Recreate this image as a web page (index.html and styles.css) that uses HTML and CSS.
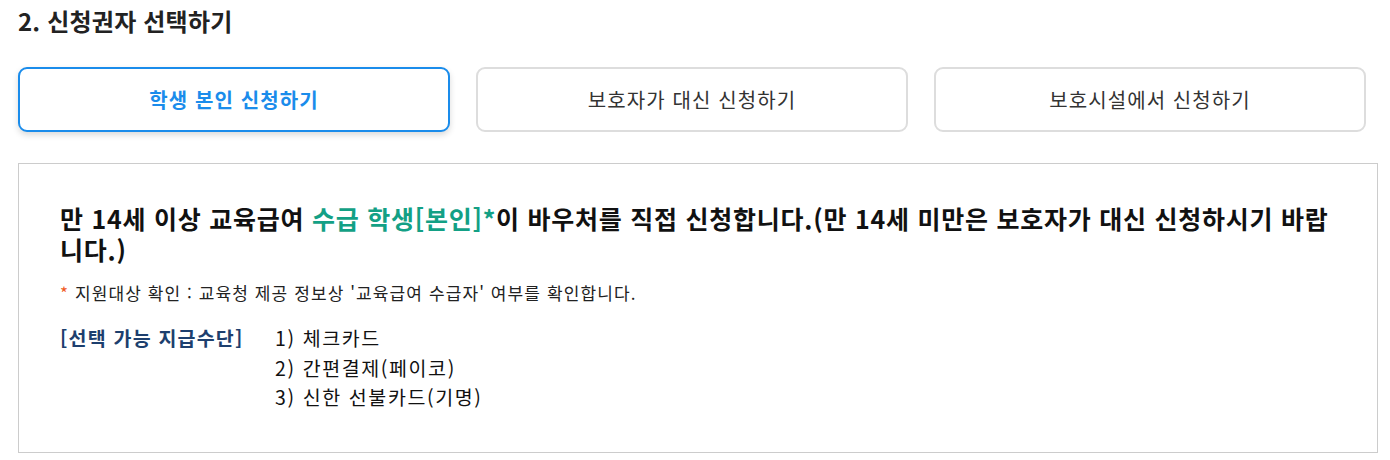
FILE: index.html
```html
<!DOCTYPE html>
<html lang="ko">
<head>
  <meta charset="UTF-8" />
  <title>신청권자 선택하기</title>
  <link rel="stylesheet" href="styles.css">
</head>
<body>
  <div class="section">
    <h2 class="section-title">2. 신청권자 선택하기</h2>

    <div class="tabs">
      <button class="tab active">학생 본인 신청하기</button>
      <button class="tab">보호자가 대신 신청하기</button>
      <button class="tab">보호시설에서 신청하기</button>
    </div>

    <div class="info-box">
      <p class="info-lead">만 14세 이상 교육급여 <span class="hl">수급 학생[본인]*</span>이 바우처를 직접 신청합니다.(만 14세 미만은 보호자가 대신 신청하시기 바랍니다.)</p>
      <p class="info-note"><span class="star">*</span> 지원대상 확인 : 교육청 제공 정보상 '교육급여 수급자' 여부를 확인합니다.</p>

      <div class="pay-means">
        <div class="pay-label">[선택 가능 지급수단]</div>
        <ul class="pay-list">
          <li>1) 체크카드</li>
          <li>2) 간편결제(페이코)</li>
          <li>3) 신한 선불카드(기명)</li>
        </ul>
      </div>
    </div>
  </div>
</body>
</html>
```

FILE: styles.css
```css
body {
  margin: 0;
  background: #fff;
  font-family: "Noto Sans CJK KR", "Noto Sans", sans-serif;
  color: #111;
}

.section {
  padding: 4px 12px 0 18px;
}

.section-title {
  margin: 0;
  font-size: 24px;
  font-weight: 700;
  color: #222;
  line-height: 34px;
  letter-spacing: 0.2px;
}

.tabs {
  display: flex;
  gap: 26px;
  margin-top: 29px;
  padding-right: 12px;
}

.tab {
  flex: 1;
  height: 65px;
  background: #fff;
  border: 2px solid #ddd;
  border-radius: 9px;
  font-family: inherit;
  font-size: 20px;
  color: #333;
  letter-spacing: 1.1px;
  padding-top: 0;
  cursor: pointer;
}

.tab.active {
  border-color: #1a8ceb;
  color: #1a8ceb;
  font-weight: 700;
  box-shadow: 0 3px 6px rgba(0, 0, 0, 0.15);
}

.info-box {
  margin-top: 31px;
  border: 1px solid #ccc;
  padding: 39px 41px 40px;
}

.info-lead {
  margin: 0;
  font-size: 25px;
  font-weight: 700;
  line-height: 31px;
  letter-spacing: 0.75px;
  color: #111;
}

.hl {
  color: #13a085;
}

.info-note {
  margin: 16px 0 0;
  font-size: 17px;
  line-height: 24px;
  color: #222;
  letter-spacing: 1.1px;
}

.star {
  color: #f05a1e;
}

.pay-means {
  display: flex;
  margin-top: 18px;
  font-size: 19.5px;
  line-height: 29.5px;
  letter-spacing: 1.2px;
}

.pay-label {
  width: 215px;
  font-weight: 700;
  color: #1d3f6e;
}

.pay-list {
  list-style: none;
  margin: 0;
  padding: 0;
  color: #111;
  letter-spacing: 1.6px;
}
```
